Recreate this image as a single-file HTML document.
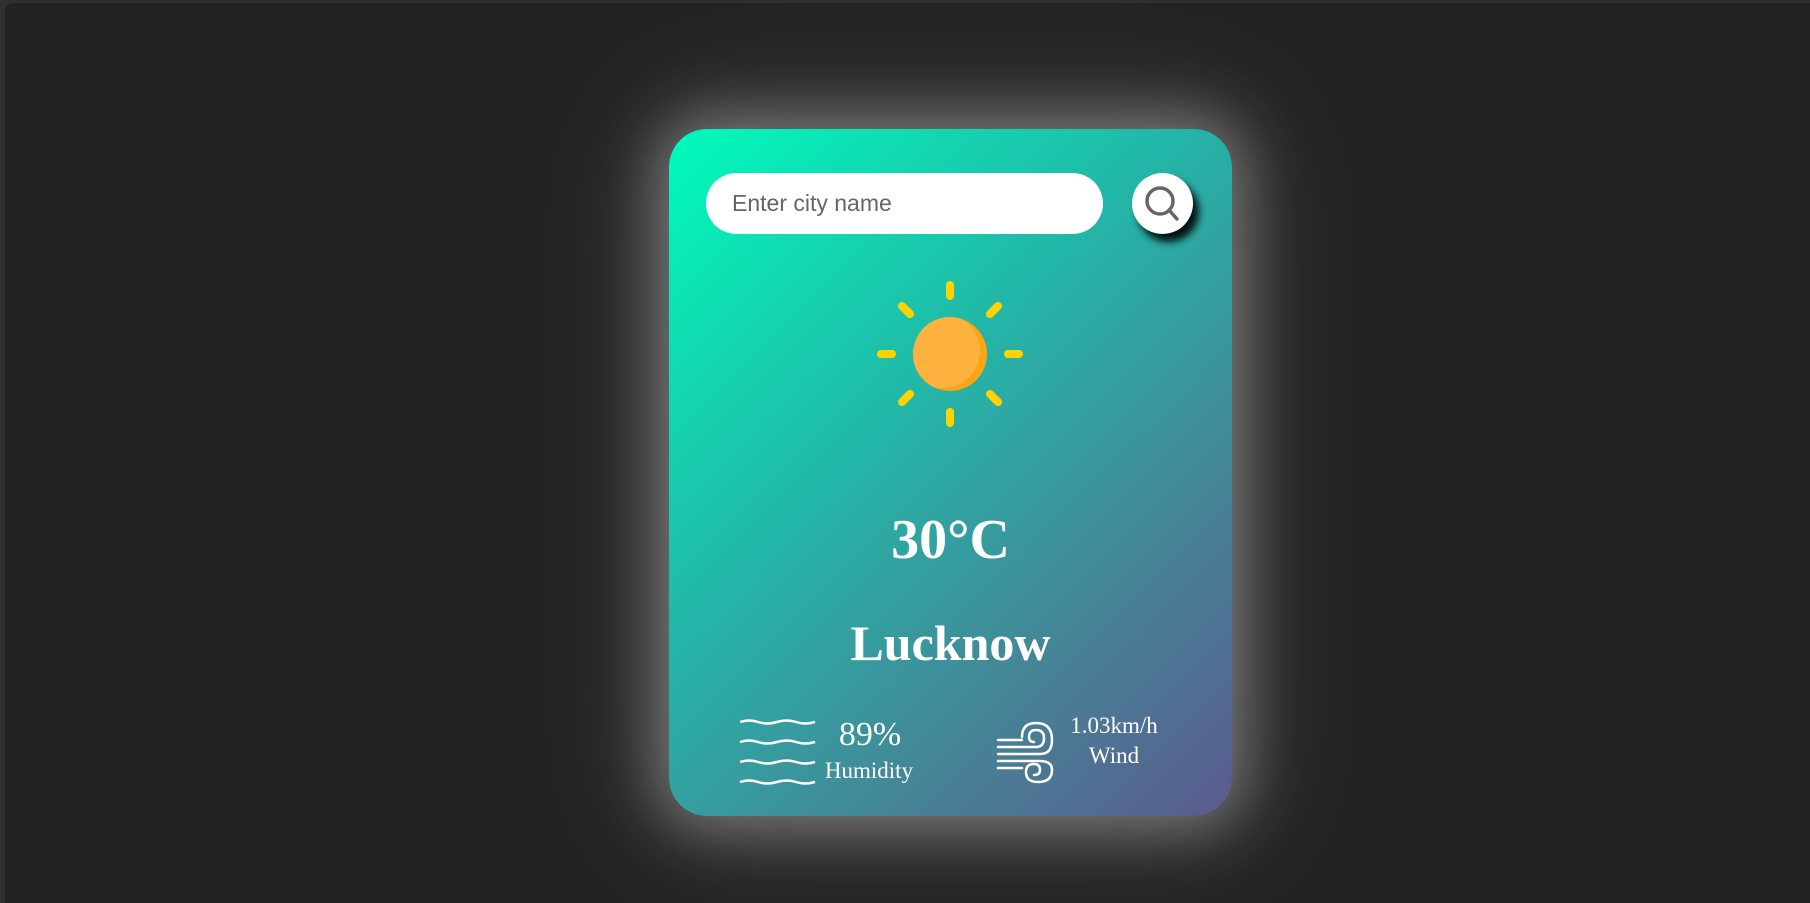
<!DOCTYPE html>
<html><head><meta charset="utf-8"><style>
html,body{margin:0;padding:0;width:1810px;height:893px;overflow:hidden;background:#2f2f2f;}
.win{position:absolute;left:5px;top:3px;width:1810px;height:900px;background:#222;border-radius:8px 0 0 0;}
.card{position:absolute;left:669px;top:129px;width:563px;height:687px;border-radius:38px;
background:linear-gradient(135deg,#00fcbc 0%,#22b8a8 40%,#438898 70%,#5b5a8e 100%);
box-shadow:0 0 60px 12px rgba(255,255,255,0.35),0 0 140px 30px rgba(255,255,255,0.12);}
.inp{position:absolute;left:37px;top:44px;width:397px;height:61px;border-radius:31px;background:#fff;
font:23px "Liberation Sans",sans-serif;color:#666;line-height:61px;box-sizing:border-box;padding-left:26px;}
.btn{position:absolute;left:463px;top:44px;width:61px;height:61px;border-radius:50%;background:#fff;
box-shadow:6px 8px 8px rgba(0,0,0,0.9);}
.t{position:absolute;left:0;width:100%;text-align:center;color:#fff;font-family:"Liberation Serif",serif;}
</style></head><body>
<div class="win"></div>
<div class="card">
<div class="inp">Enter city name</div>
<div class="btn"><svg width="61" height="61" viewBox="0 0 61 61"><circle cx="28" cy="28" r="13" fill="none" stroke="#666" stroke-width="3.5"/><line x1="37" y1="37" x2="45" y2="46" stroke="#666" stroke-width="3.5" stroke-linecap="round"/></svg></div>
<svg style="position:absolute;left:206px;top:150px" width="150" height="150" viewBox="0 0 150 150">
<defs><clipPath id="c"><circle cx="75" cy="75" r="37"/></clipPath></defs>
<g stroke="#ffd200" stroke-width="8" stroke-linecap="round">
<line x1="75" y1="6" x2="75" y2="17"/><line x1="75" y1="133" x2="75" y2="144"/>
<line x1="6" y1="75" x2="17" y2="75"/><line x1="133" y1="75" x2="144" y2="75"/>
<line x1="27" y1="27" x2="35" y2="35"/><line x1="115" y1="115" x2="123" y2="123"/>
<line x1="123" y1="27" x2="115" y2="35"/><line x1="35" y1="115" x2="27" y2="123"/></g>
<circle cx="75" cy="75" r="37" fill="#ffa515"/>
<circle cx="68" cy="72" r="37" fill="#fdb240" clip-path="url(#c)"/>
</svg>
<div class="t" style="top:378px;font-size:56px;font-weight:bold;line-height:66px;">30°C</div>
<div class="t" style="top:482px;font-size:50px;font-weight:bold;line-height:64px;">Lucknow</div>
<svg style="position:absolute;left:70px;top:590px" width="78" height="66" viewBox="0 0 78 66" fill="none" stroke="#fff" stroke-width="2.5">
<path d="M1 3 Q10 0 19 3 T38 3 T57 3 T76 3"/><path d="M1 23 Q10 20 19 23 T38 23 T57 23 T76 23"/>
<path d="M1 43 Q10 40 19 43 T38 43 T57 43 T76 43"/><path d="M1 63 Q10 60 19 63 T38 63 T57 63 T76 63"/></svg>
<div class="t" style="left:166px;width:70px;top:588px;font-size:34px;line-height:36px;">89%</div>
<div class="t" style="left:153px;width:94px;top:628px;font-size:23px;line-height:28px;">Humidity</div>
<svg style="position:absolute;left:327px;top:591px" width="62" height="64" viewBox="0 0 62 64" fill="none" stroke="#fff" stroke-width="2.5" stroke-linecap="round">
<path d="M2 20 H26 M2 27 H40 Q48 27 48 18 Q48 10 40 10 Q33 10 33 17 Q33 22 38 22"/>
<path d="M2 34 H44 Q56 34 56 20 Q56 3 40 3 Q26 3 26 17"/>
<path d="M2 41 H44 Q56 41 56 50 Q56 62 42 62 Q30 62 30 52 Q30 44 38 44 Q44 44 44 50 Q44 55 38 55"/>
<path d="M2 48 H26"/></svg>
<div class="t" style="left:388px;width:114px;top:583px;font-size:23px;line-height:27px;">1.03km/h</div>
<div class="t" style="left:388px;width:114px;top:613px;font-size:23px;line-height:27px;">Wind</div>
</div>
</body></html>
